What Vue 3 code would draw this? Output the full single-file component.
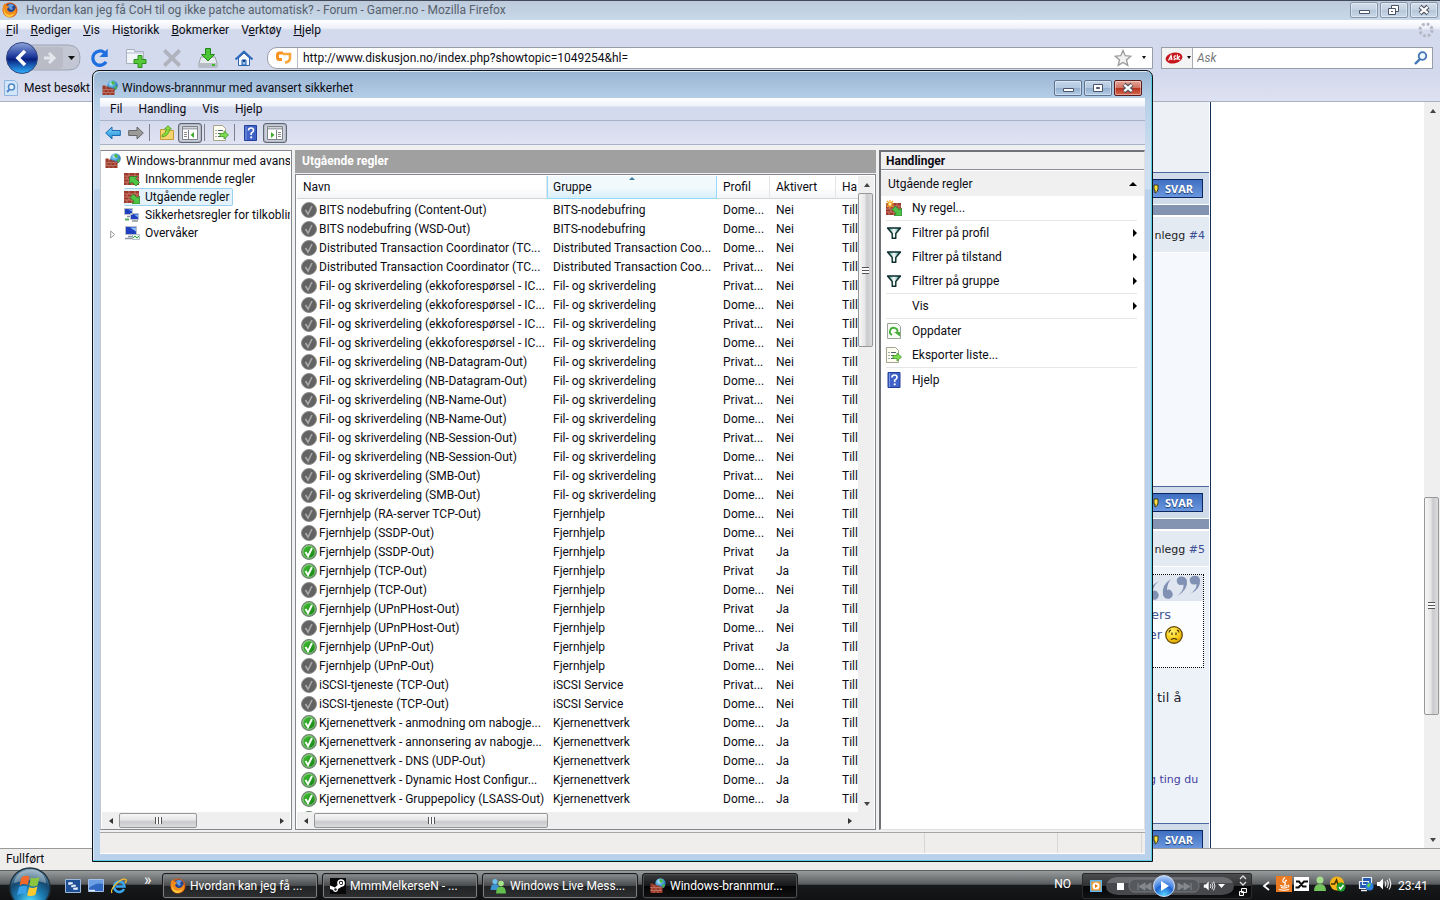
<script setup>
const ffMenu = [
  ['', 'F', 'il'],
  ['', 'R', 'ediger'],
  ['', 'V', 'is'],
  ['Hi', 's', 'torikk'],
  ['', 'B', 'okmerker'],
  ['V', 'e', 'rktøy'],
  ['', 'H', 'jelp'],
]
const navButtons = [
  ['reload', 'Last på nytt'],
  ['newtab', 'Ny fane'],
  ['stop', 'Stopp'],
  ['download', 'Nedlastinger'],
  ['home', 'Hjem'],
]
const mmcMenu = ['Fil', 'Handling', 'Vis', 'Hjelp']

const bits = 'BITS-nodebufring'
const dtc = 'Distributed Transaction Coo...'
const fil = 'Fil- og skriverdeling'
const fj = 'Fjernhjelp'
const isc = 'iSCSI Service'
const kj = 'Kjernenettverk'
const rules = [
  ['BITS nodebufring (Content-Out)', bits, 'Dome...', 0],
  ['BITS nodebufring (WSD-Out)', bits, 'Dome...', 0],
  ['Distributed Transaction Coordinator (TC...', dtc, 'Dome...', 0],
  ['Distributed Transaction Coordinator (TC...', dtc, 'Privat...', 0],
  ['Fil- og skriverdeling (ekkoforespørsel - IC...', fil, 'Privat...', 0],
  ['Fil- og skriverdeling (ekkoforespørsel - IC...', fil, 'Dome...', 0],
  ['Fil- og skriverdeling (ekkoforespørsel - IC...', fil, 'Privat...', 0],
  ['Fil- og skriverdeling (ekkoforespørsel - IC...', fil, 'Dome...', 0],
  ['Fil- og skriverdeling (NB-Datagram-Out)', fil, 'Privat...', 0],
  ['Fil- og skriverdeling (NB-Datagram-Out)', fil, 'Dome...', 0],
  ['Fil- og skriverdeling (NB-Name-Out)', fil, 'Privat...', 0],
  ['Fil- og skriverdeling (NB-Name-Out)', fil, 'Dome...', 0],
  ['Fil- og skriverdeling (NB-Session-Out)', fil, 'Privat...', 0],
  ['Fil- og skriverdeling (NB-Session-Out)', fil, 'Dome...', 0],
  ['Fil- og skriverdeling (SMB-Out)', fil, 'Privat...', 0],
  ['Fil- og skriverdeling (SMB-Out)', fil, 'Dome...', 0],
  ['Fjernhjelp (RA-server TCP-Out)', fj, 'Dome...', 0],
  ['Fjernhjelp (SSDP-Out)', fj, 'Dome...', 0],
  ['Fjernhjelp (SSDP-Out)', fj, 'Privat', 1],
  ['Fjernhjelp (TCP-Out)', fj, 'Privat', 1],
  ['Fjernhjelp (TCP-Out)', fj, 'Dome...', 0],
  ['Fjernhjelp (UPnPHost-Out)', fj, 'Privat', 1],
  ['Fjernhjelp (UPnPHost-Out)', fj, 'Dome...', 0],
  ['Fjernhjelp (UPnP-Out)', fj, 'Privat', 1],
  ['Fjernhjelp (UPnP-Out)', fj, 'Dome...', 0],
  ['iSCSI-tjeneste (TCP-Out)', isc, 'Privat...', 0],
  ['iSCSI-tjeneste (TCP-Out)', isc, 'Dome...', 0],
  ['Kjernenettverk - anmodning om nabogje...', kj, 'Dome...', 1],
  ['Kjernenettverk - annonsering av nabogje...', kj, 'Dome...', 1],
  ['Kjernenettverk - DNS (UDP-Out)', kj, 'Dome...', 1],
  ['Kjernenettverk - Dynamic Host Configur...', kj, 'Dome...', 1],
  ['Kjernenettverk - Gruppepolicy (LSASS-Out)', kj, 'Dome...', 1],
]

const actions = [
  { icon: 'newrule', label: 'Ny regel...', end: true },
  { icon: 'funnel', label: 'Filtrer på profil', sub: true },
  { icon: 'funnel', label: 'Filtrer på tilstand', sub: true },
  { icon: 'funnel', label: 'Filtrer på gruppe', sub: true, end: true },
  { icon: '', label: 'Vis', sub: true, end: true },
  { icon: 'refreshdoc', label: 'Oppdater' },
  { icon: 'export', label: 'Eksporter liste...', end: true },
  { icon: 'help', label: 'Hjelp' },
]

const tasks = [
  { icon: 'firefox', label: 'Hvordan kan jeg få ...' },
  { icon: 'steam', label: 'MmmMelkerseN - ...' },
  { icon: 'people', label: 'Windows Live Mess...' },
  { icon: 'firewall', label: 'Windows-brannmur...', active: true },
]
</script>

<template>
  <div class="desktop">
    <svg class="defs" width="0" height="0" aria-hidden="true">
      <defs>
        <linearGradient id="gBack" x1="0" y1="0" x2="0" y2="1">
          <stop offset="0" stop-color="#8fa5dd" /><stop offset=".45" stop-color="#1d3a9c" />
          <stop offset=".55" stop-color="#08207f" /><stop offset="1" stop-color="#2fb4ff" />
        </linearGradient>
        <linearGradient id="gGreen" x1="0" y1="0" x2="1" y2="1">
          <stop offset="0" stop-color="#4cc83a" /><stop offset="1" stop-color="#0e7a10" />
        </linearGradient>
        <linearGradient id="gBlue" x1="0" y1="0" x2="0" y2="1">
          <stop offset="0" stop-color="#7fd2f7" /><stop offset="1" stop-color="#1d8fdc" />
        </linearGradient>
        <linearGradient id="gFunnel" x1="0" y1="0" x2="1" y2="0">
          <stop offset=".15" stop-color="#5fa9a4" /><stop offset=".5" stop-color="#ffffff" /><stop offset=".9" stop-color="#3c9a94" />
        </linearGradient>
        <radialGradient id="gGlobe" cx=".4" cy=".3" r=".7">
          <stop offset="0" stop-color="#c9f0ff" /><stop offset=".5" stop-color="#4aa5dc" /><stop offset="1" stop-color="#1b5c9f" />
        </radialGradient>
        <radialGradient id="gOrb" cx=".5" cy=".85" r=".85">
          <stop offset="0" stop-color="#55e0ff" /><stop offset=".4" stop-color="#1c7cb4" />
          <stop offset=".7" stop-color="#16486f" /><stop offset="1" stop-color="#8aa9bd" />
        </radialGradient>
        <radialGradient id="gPlay" cx=".5" cy=".95" r=".95">
          <stop offset="0" stop-color="#59d8ff" /><stop offset=".5" stop-color="#1b5fd0" />
          <stop offset=".55" stop-color="#3f7fe0" /><stop offset="1" stop-color="#b9d3f7" />
        </radialGradient>
        <radialGradient id="gSmile" cx=".4" cy=".3" r=".8">
          <stop offset="0" stop-color="#fff36a" /><stop offset=".6" stop-color="#f7c916" /><stop offset="1" stop-color="#c98a00" />
        </radialGradient>
      </defs>

      <symbol id="firefox" viewBox="0 0 16 16">
        <circle cx="8" cy="8" r="7.500" fill="#d9590f" />
        <circle cx="8.600" cy="6.600" r="5.200" fill="#28468f" />
        <path d="M6 3q3-2 6 0l-2 2 1 2-2 1-2-2z" fill="#5f9be0" />
        <path d="M1 4q1-2 2-3l.5 2.200Q6 3 7 5L5 7q1 3 4 3 3 0 4.600-4Q16 11 11.500 14 6 17 2 12 0 9 1 4z" fill="#f08a1c" />
        <path d="M2 6q0 5 4 6.500 4 1 7-2-2 5-7 4.500Q1 13 2 6z" fill="#ffc83a" />
      </symbol>
      <symbol id="reload" viewBox="0 0 20 20">
        <path d="M15.500 13.500A6.500 6.500 0 1 1 14 5" fill="none" stroke="#1f6fe0" stroke-width="3" />
        <path d="M17 1.500v7.500h-7.500z" fill="#1f6fe0" />
      </symbol>
      <symbol id="newtab" viewBox="0 0 22 22">
        <path d="M1.500 16.500v-14h8v2h9v12z" fill="#f2f5fa" stroke="#a8b0c0" />
        <path d="M2 6h16" stroke="#d2d8e4" stroke-width="2" />
        <path d="M13 8.500h4v4h4v4h-4v4h-4v-4H9v-4h4z" fill="#57c83a" stroke="#2b8f1c" />
      </symbol>
      <symbol id="stop" viewBox="0 0 20 20">
        <path d="M3 3l14 14M17 3L3 17" stroke="#b0b3bd" stroke-width="3.500" />
      </symbol>
      <symbol id="download" viewBox="0 0 22 22">
        <path d="M4 10h14l2 6v4H2v-4z" fill="#e9ecef" stroke="#9aa0a8" />
        <path d="M2 16h18v4H2z" fill="#b7bdc4" /><path d="M15 18h3" stroke="#39b82c" stroke-width="2" />
        <path d="M8.500 1.500h5v6h4L11 14 4.500 7.500h4z" fill="#4cc436" stroke="#23871a" />
      </symbol>
      <symbol id="home" viewBox="0 0 22 22">
        <path d="M5.500 11v7.500h11V11L11 6z" fill="#f3f7fc" stroke="#2c64b0" />
        <path d="M2.500 12.500L11 4.500l8.500 8" fill="none" stroke="#2c69bd" stroke-width="2" />
        <path d="M9 13h4v5H9z" fill="#9ac5ee" stroke="#1f5cab" /><circle cx="11" cy="14" r="1.200" fill="#123f82" />
      </symbol>
      <symbol id="site" viewBox="0 0 18 16">
        <path d="M9 3H5.500Q3.500 3 3.500 5v2.500q0 2 2 2H8" fill="none" stroke="#f7931e" stroke-width="3" />
        <path d="M9 4h7v4q0 4-5 4.500" fill="none" stroke="#f7a63a" stroke-width="2.600" />
      </symbol>
      <symbol id="star" viewBox="0 0 18 18">
        <path d="M9 1.500l2.200 5.200 5.500.5-4.200 3.700 1.300 5.500L9 13.500l-4.800 2.900 1.300-5.500L1.300 7.200l5.500-.5z" fill="#f1f1f1" stroke="#9a9a9a" stroke-width="1.300" />
      </symbol>
      <symbol id="ask" viewBox="0 0 18 14">
        <ellipse cx="9" cy="7" rx="8.500" ry="5.300" fill="#c4161c" transform="rotate(-12 9 7)" />
        <path d="M3.500 9.500L6 4.500l1 4.500M4.500 8h2.300M11 5q-2-.5-2 1t1.300 1.500T8.600 9M12.500 3.500l-.5 5.500M15 5l-2.500 2L15 9" fill="none" stroke="#fff" stroke-width="1.200" />
      </symbol>
      <symbol id="search" viewBox="0 0 14 14">
        <circle cx="8.500" cy="5" r="3.800" fill="#eef6fd" stroke="#3f74b5" stroke-width="1.800" />
        <path d="M6 8l-5 5" stroke="#3f74b5" stroke-width="2.400" />
      </symbol>
      <symbol id="bookmark" viewBox="0 0 14 16">
        <path d="M.5.5h10l3 3v12H.5z" fill="#d3e5f8" stroke="#8db5de" />
        <circle cx="7.500" cy="7" r="3" fill="#eaf4fd" stroke="#4f86c4" stroke-width="1.500" />
        <path d="M5.500 9.500L3 12" stroke="#4f86c4" stroke-width="2" />
      </symbol>
      <symbol id="firewall" viewBox="0 0 16 16">
        <circle cx="10.500" cy="5.500" r="5.200" fill="url(#gGlobe)" />
        <path d="M10 1q3 0 3 3l-2 1-2-2zM12 7l3-1q0 3-2 4z" fill="#4db848" />
        <path d="M.5 5.500h3v1h3v1h3v1h3V15H.5z" fill="#9c3a2a" />
        <path d="M0 9.500h12M0 12.500h12M4 7v3M8 9v1M2 10v3M6 10v3M10 10v3M4 13v2M8 13v2" stroke="#c98a7a" stroke-width=".6" />
      </symbol>
      <symbol id="bricks" viewBox="0 0 16 14">
        <path d="M0 1h15v12H0z" fill="#9d3a2c" />
        <path d="M0 4h15M0 7h15M0 10h15M5 1v3M11 1v3M3 4v3M8 4v3M13 4v3M5 7v3M10 7v3M3 10v3M8 10v3" stroke="#d0897c" stroke-width=".8" />
      </symbol>
      <symbol id="inrule" viewBox="0 0 16 14">
        <use href="#bricks" width="16" height="14" />
        <path d="M5.500 4.500h8l-2 2 4 4-3.500 3.500-4-4-2.500 2z" fill="#4fc348" stroke="#1d7a1c" stroke-width=".7" />
      </symbol>
      <symbol id="outrule" viewBox="0 0 16 14">
        <use href="#bricks" width="16" height="14" />
        <path d="M6 7.500L9.500 4l4 4 2-2v8H8l2-2.500z" fill="#4fc348" stroke="#1d7a1c" stroke-width=".7" />
      </symbol>
      <symbol id="newrule" viewBox="0 0 16 16">
        <use href="#bricks" y="2" width="16" height="14" />
        <path d="M6 9.500L9.500 6l4 4 2-2v8H8l2-2.500z" fill="#4fc348" stroke="#1d7a1c" stroke-width=".7" />
        <path d="M4 0v8M0 4h8M1 1l6 6M7 1L1 7" stroke="#f6a623" stroke-width="1.200" /><circle cx="4" cy="4" r="1.500" fill="#fff3a0" />
      </symbol>
      <symbol id="conn" viewBox="0 0 16 14">
        <path d="M.5.5h8v6h-8zM6.500 5.500h8v6h-8z" fill="#1d3fc0" stroke="#b8bec8" />
        <path d="M4 1.500h4v2zM10 6.500h4v3z" fill="#7fb0f5" /><path d="M3 8.500h3M8 13h6" stroke="#8b93a0" stroke-width="1.500" />
        <path d="M1 10.500h4v2H1z" fill="#58a858" />
      </symbol>
      <symbol id="monitor" viewBox="0 0 16 14">
        <path d="M1.500.5h11v8h-11z" fill="#1d3fc0" stroke="#b8bec8" />
        <path d="M6 1.500h6v4z" fill="#8fbcf8" /><path d="M4 10.500h7M1 12.500h10" stroke="#8d95a3" stroke-width="1.500" />
        <path d="M8.500 8.500h7v5h-7z" fill="#e8f3ea" stroke="#9ab" stroke-width=".7" /><path d="M9 12l2-2 2 2 2-2" fill="none" stroke="#2fa03a" />
      </symbol>
      <symbol id="tick0" viewBox="0 0 16 16">
        <circle cx="8" cy="8" r="7.500" fill="#636363" stroke="#8c8c8c" />
        <path d="M4.500 8l2.500 4L11 4" fill="none" stroke="#a9a9a9" stroke-width="1.600" />
      </symbol>
      <symbol id="tick1" viewBox="0 0 16 16">
        <circle cx="8" cy="8" r="7.300" fill="url(#gGreen)" stroke="#70806f" stroke-width="1.300" />
        <circle cx="8" cy="8" r="6.200" fill="none" stroke="#c4dcc0" stroke-width=".7" />
        <path d="M4.500 8l2.500 4L11 4" fill="none" stroke="#fff" stroke-width="1.900" />
      </symbol>
      <symbol id="arrl" viewBox="0 0 16 14">
        <path d="M.7 7L7 1v3.500h8.300v5H7V13z" fill="url(#gBlue)" stroke="#1e6bb0" />
      </symbol>
      <symbol id="arrr" viewBox="0 0 16 14">
        <path d="M15.300 7L9 1v3.500H.7v5H9V13z" fill="#9a9a9a" stroke="#666" />
      </symbol>
      <symbol id="folder" viewBox="0 0 16 16">
        <path d="M1.500 4.500h4l1 1h8v9h-13z" fill="#f4d471" stroke="#c79b34" />
        <path d="M3 10Q7 9 7.500 4H5.500L9 .8 12.500 4h-2Q10 11 3 12z" fill="#8bdc3a" stroke="#4d9a1c" stroke-width=".8" />
      </symbol>
      <symbol id="pane" viewBox="0 0 16 14">
        <path d="M.5.5h15v13H.5z" fill="#fff" stroke="#7d8188" /><path d="M1 2.500h14" stroke="#a6aab2" stroke-width="2" />
        <path d="M6.500 4v9" stroke="#7d8188" /><path d="M2 6.500h3M2 8.500h3M2 10.500h3" stroke="#888" />
        <path d="M12 6v6L8.500 9z" fill="#3fae2f" />
      </symbol>
      <symbol id="pane2" viewBox="0 0 16 14">
        <path d="M.5.5h15v13H.5z" fill="#fff" stroke="#7d8188" /><path d="M1 2.500h14" stroke="#a6aab2" stroke-width="2" />
        <path d="M9.500 4v9" stroke="#7d8188" /><path d="M11 6.500h3M11 8.500h3M11 10.500h3" stroke="#888" />
        <path d="M4 6v6l3.500-3z" fill="#3fae2f" />
      </symbol>
      <symbol id="export" viewBox="0 0 16 16">
        <path d="M.5.500h9l3 3v12H.5z" fill="#fdfcf0" stroke="#a3a38e" />
        <path d="M2.500 5.500h1M5 5.500h5M2.500 8.500h1M5 8.500h3M2.500 11.500h1M5 11.500h3" stroke="#55606e" />
        <path d="M7 8.500h4V6l4.500 4-4.500 4v-2.500H7z" fill="#7fdc52" stroke="#3b9c23" stroke-width=".8" />
      </symbol>
      <symbol id="help" viewBox="0 0 13 16">
        <path d="M.5.5h12v15H.5z" fill="#3f62c8" stroke="#243f98" /><path d="M2 1v14" stroke="#7d98e6" />
        <path d="M4.500 5.500Q4.500 3 7 3t2.500 2.200Q9.500 7 7.200 8.200V10" fill="none" stroke="#fff" stroke-width="1.600" /><circle cx="7.200" cy="12.300" r="1.100" fill="#fff" />
      </symbol>
      <symbol id="refreshdoc" viewBox="0 0 14 16">
        <path d="M.5.5h10l3 3v12H.5z" fill="#f6fbf4" stroke="#9da59a" />
        <path d="M5 12A3.800 3.800 0 1 1 10.500 9" fill="none" stroke="#45ad3a" stroke-width="1.800" /><path d="M7 9h6v4.500z" fill="#45ad3a" />
      </symbol>
      <symbol id="funnel" viewBox="0 0 16 14">
        <path d="M1.500 2h13L9.800 7.500v4.800H6.200V7.500z" fill="url(#gFunnel)" stroke="#0b2c2b" stroke-width="1.400" stroke-linejoin="round" />
      </symbol>
      <symbol id="steam" viewBox="0 0 16 16">
        <path d="M0 0h16v16H0z" fill="#080808" />
        <circle cx="11" cy="5" r="3" fill="none" stroke="#fff" stroke-width="1.700" /><circle cx="11" cy="5" r="1.300" fill="#fff" />
        <path d="M0 7.500l5 2 4-4 3 3-4 2.500q0 3-2.600 3-2 0-2.400-2L0 11z" fill="#fff" /><circle cx="5.500" cy="11.500" r="1.200" fill="#222" />
      </symbol>
      <symbol id="people" viewBox="0 0 16 16">
        <circle cx="5" cy="3.500" r="2.600" fill="#6fc0ec" /><path d="M.5 12q0-6 4.500-6t4.500 6z" fill="#3c93d0" />
        <circle cx="11" cy="5.500" r="2.800" fill="#a6e58a" /><path d="M6 15.500Q6 8.500 11 8.500t5 7z" fill="#63bf4e" />
      </symbol>
      <symbol id="orb" viewBox="0 0 44 44">
        <circle cx="22" cy="22" r="21" fill="url(#gOrb)" stroke="#1d3444" stroke-width="1.500" />
        <path d="M5 17Q8 4 22 3t17 14q-17-6-34 0z" fill="#fff" opacity=".35" />
        <path d="M13 11q4-3 8.500-.8l-1.800 8.600q-4.500-2-8.700.5z" fill="#f2672a" />
        <path d="M23 11q4.500 2 9-.5l-2 8.500q-4 2.500-8.800.3z" fill="#8cc63e" />
        <path d="M10.500 21q4.500-2.500 8.800-.5l-2 8.500q-4-2-8.800.5z" fill="#3aa0e8" />
        <path d="M21 21q4.500 2 8.800-.5l-2 8.500q-4.500 2.500-8.800.5z" fill="#fcc92e" />
      </symbol>
      <symbol id="switcher" viewBox="0 0 16 14">
        <path d="M.5.5h15v13H.5z" fill="#1f4f94" stroke="#9db8dd" />
        <path d="M3 3h5v3H3zM6 5.500h5v3H6zM8 8h5v3H8z" fill="#eaf3fd" stroke="#1f4f94" stroke-width=".5" />
      </symbol>
      <symbol id="showdesk" viewBox="0 0 16 14">
        <path d="M.5.5h15v12H.5z" fill="#2f68c0" stroke="#a5c0e8" /><path d="M1 9Q8 3 15 5V1H1z" fill="#6c9fe4" /><path d="M1 11.500h6" stroke="#dfeafa" stroke-width="1.500" />
      </symbol>
      <symbol id="ie" viewBox="0 0 16 16">
        <path d="M13 11A5.200 5.200 0 1 1 13.500 8.500H5" fill="none" stroke="#3aa6ee" stroke-width="2.600" />
        <path d="M1 15Q-1 12 5 6T15 1.500Q16 3 14 5" fill="none" stroke="#f6c02c" stroke-width="1.300" />
      </symbol>
      <symbol id="wmp" viewBox="0 0 12 12">
        <path d="M.7.7h10.600v10.600H.7z" fill="#f39a2c" stroke="#5fb4ea" stroke-width="1.400" /><circle cx="6" cy="6" r="3.500" fill="#fff" /><path d="M5 4v4l3-2z" fill="#e5700c" />
      </symbol>
      <symbol id="speaker" viewBox="0 0 16 14">
        <path d="M1 5h2.500L7 1.500v11L3.500 9H1z" fill="#fff" /><path d="M9 4.500q1.500 2.500 0 5M11 3q2.500 4 0 8M13 1.500q3.500 5.500 0 11" fill="none" stroke="#e8e8e8" stroke-width="1.200" />
      </symbol>
      <symbol id="java" viewBox="0 0 16 16">
        <path d="M0 0h16v16H0z" fill="#ea7a22" /><path d="M9 1.500Q5 5 8 6.500T8 9M11 4Q8 5.500 9.500 7M4 9.500q4 1.500 7.500 0M5 11.500q3 1 6 0M3 13.500q5 1.500 10 0M12 9q2 1-.5 2.500" fill="none" stroke="#fff" stroke-width="1.100" />
      </symbol>
      <symbol id="xtray" viewBox="0 0 16 16">
        <path d="M0 1h15v14H0z" fill="#fff" /><path d="M1.500 11.500h3L10 5.500h4M2 5.500h3l4 5h3.500" fill="none" stroke="#0c0c0c" stroke-width="2" />
      </symbol>
      <symbol id="buddy" viewBox="0 0 14 16">
        <circle cx="7" cy="4" r="3.500" fill="#a5df8c" /><path d="M1 15Q1 8 7 8t6 7z" fill="#74c25d" />
      </symbol>
      <symbol id="norton" viewBox="0 0 16 16">
        <circle cx="7" cy="7.500" r="7" fill="#f7b519" /><path d="M1 8h3.500l2-4 2 6 1.500-2h3" fill="none" stroke="#4a3200" stroke-width="1.600" />
        <circle cx="11" cy="11" r="4.500" fill="#1f9a2b" /><path d="M9 11l1.500 2 3-4" fill="none" stroke="#fff" stroke-width="1.500" />
      </symbol>
      <symbol id="net" viewBox="0 0 16 16">
        <path d="M4.500 1.500h9v7h-9zM1.500 5.500h9v7h-9z" fill="#235ab0" stroke="#e5edf8" stroke-width="1.200" /><path d="M3 14.500h6" stroke="#e5edf8" stroke-width="1.500" />
        <circle cx="11.500" cy="10.500" r="4" fill="#2b7fe0" /><path d="M9 9q2-3 4-1l-1 2-2 2z" fill="#5fd04e" />
      </symbol>
      <symbol id="sad" viewBox="0 0 18 18">
        <circle cx="9" cy="9" r="8.300" fill="url(#gSmile)" stroke="#5e4000" stroke-width="1.200" />
        <path d="M7 6.500v2.500M11 6.500v2.500M5.800 13.200h1q2.200-1.400 4.400 0h1M4 6.500q0-2 2-2.500M14 6.500q0-2-2-2.500" fill="none" stroke="#3a2800" stroke-width="1.100" />
      </symbol>
      <symbol id="mark" viewBox="0 0 12 10">
        <path d="M1 1h4v4q0 3-3 4V6H1zM7 1h4v4q0 3-3 4V6H7z" fill="#ffe03a" stroke="#3a3a20" />
      </symbol>
      <symbol id="quotes" viewBox="0 0 54 26">
        <g fill="#8191b3">
          <path d="M10 6Q-1 12 1 21q2 5 6 3.500 5-3 1-8-2-1.500-4-.5 0-5 6-10z" />
          <path d="M22 4Q12 10 14 20q2 5 7 3.500 5-3 1-8-2-1.500-4-.5 0-6 4-11z" />
          <path d="M28 21Q39 15 38 6q-1-5-7-4.500-5 2-2.500 7 2 2.500 6 1Q35 16 28 21z" />
          <path d="M41 19Q52 14 51 5q-1-5-7-4-5 2-2.500 7 2 2.500 6 1Q48 14 41 19z" />
        </g>
      </symbol>
      <symbol id="minus" viewBox="0 0 26 14">
        <path d="M8.500 7.500h10v3h-10z" fill="#fff" stroke="#4a5668" />
      </symbol>
      <symbol id="max" viewBox="0 0 26 14">
        <path d="M8.500 3.500h9v7h-9z" fill="#fff" stroke="#4a5668" /><path d="M11.500 6.500h3v1h-3z" fill="#7b8fa8" stroke="#4a5668" />
      </symbol>
      <symbol id="restore" viewBox="0 0 26 14">
        <path d="M10.500 2.500h7v6h-7z" fill="#fff" stroke="#4a5668" /><path d="M7.500 5.500h7v6h-7z" fill="#fff" stroke="#4a5668" /><path d="M10 8.500h2" stroke="#4a5668" />
      </symbol>
      <symbol id="close" viewBox="0 0 26 14">
        <path d="M9 3.500l8 7M17 3.500l-8 7" stroke="#4a4f5e" stroke-width="4.400" /><path d="M9.300 3.800l7.400 6.400M16.700 3.800l-7.400 6.400" stroke="#fff" stroke-width="2.400" />
      </symbol>
    </svg>

    <!-- Browser window -->
    <main class="browser">
      <header class="ff-title">
        <svg width="16" height="16"><use href="#firefox" /></svg>
        <span class="ff-name">Hvordan kan jeg få CoH til og ikke patche automatisk? - Forum - Gamer.no - Mozilla Firefox</span>
        <button class="cap" aria-label="Minimer"><svg width="26" height="14"><use href="#minus" /></svg></button>
        <button class="cap" aria-label="Gjenopprett"><svg width="26" height="14"><use href="#restore" /></svg></button>
        <button class="cap" aria-label="Lukk"><svg width="26" height="14"><use href="#close" /></svg></button>
      </header>
      <nav class="ff-menu">
        <button v-for="m in ffMenu" :key="m.join('')">{{ m[0] }}<u>{{ m[1] }}</u>{{ m[2] }}</button>
        <svg class="throbber" width="16" height="16" viewBox="0 0 16 16">
          <circle cx="8" cy="8" r="6" fill="none" stroke="#b5b8c4" stroke-width="3" stroke-dasharray="2.700 2.010" />
        </svg>
      </nav>
      <div class="ff-nav">
        <svg class="backfwd" width="78" height="32" viewBox="0 0 78 32">
          <path d="M16 3h50q11 1 11 13t-11 12H16z" fill="#c3c7d4" stroke="#9fa4b4" />
          <path d="M32 5h24q4 0 4 4v14q0 4-4 4H32z" fill="#b9bcc7" />
          <path d="M41 16h10M46 11l5 5-5 5" fill="none" stroke="#e4e6ec" stroke-width="3" />
          <path d="M65 14h7l-3.500 4z" fill="#111" />
          <circle cx="19" cy="16" r="15.500" fill="url(#gBack)" stroke="#33457c" />
          <path d="M22 9l-7 7 7 7" fill="none" stroke="#fff" stroke-width="3.500" />
        </svg>
        <button v-for="b in navButtons" :key="b[0]" class="nb" :aria-label="b[1]">
          <svg width="22" height="22"><use :href="'#' + b[0]" /></svg>
        </button>
        <div class="url">
          <span class="fav"><svg width="18" height="16"><use href="#site" /></svg></span>
          <input aria-label="Adresse" value="http://www.diskusjon.no/index.php?showtopic=1049254&amp;hl=" />
          <svg width="18" height="18"><use href="#star" /></svg>
          <button class="drop" aria-label="Historikk"></button>
        </div>
        <div class="find">
          <button class="engine" aria-label="Søkemotor"><svg width="18" height="14"><use href="#ask" /></svg><i class="drop"></i></button>
          <input class="ask" aria-label="Søk" placeholder="Ask" />
          <svg width="14" height="14"><use href="#search" /></svg>
        </div>
      </div>
      <div class="ff-marks">
        <svg width="14" height="16"><use href="#bookmark" /></svg>
        <a href="#">Mest besøkt</a>
      </div>
      <div class="ff-view">
        <div class="page">
          <section class="post">
            <div class="body b1"></div>
            <footer><button class="svar"><svg width="12" height="10"><use href="#mark" /></svg>SVAR</button></footer>
          </section>
          <section class="post">
            <div class="bar"></div>
            <div class="head">nlegg <a href="#">#4</a></div>
            <div class="body b2"></div>
            <footer><button class="svar"><svg width="12" height="10"><use href="#mark" /></svg>SVAR</button></footer>
          </section>
          <section class="post">
            <div class="bar"></div>
            <div class="head">nlegg <a href="#">#5</a></div>
            <div class="body b3">
              <blockquote>
                <div class="qh"><svg width="54" height="26"><use href="#quotes" /></svg></div>
                <p>ers</p>
                <p class="p2">er <svg width="18" height="18"><use href="#sad" /></svg></p>
              </blockquote>
              <p class="say">til å</p>
              <p class="sig">g ting du</p>
            </div>
            <footer><button class="svar"><svg width="12" height="10"><use href="#mark" /></svg>SVAR</button></footer>
          </section>
        </div>
        <div class="sb v">
          <button class="up" aria-label="Opp"></button>
          <i class="g380"></i><span class="thumb g217"></span><i class="g117"></i>
          <button class="down" aria-label="Ned"></button>
        </div>
      </div>
      <footer class="ff-status">Fullført</footer>
    </main>

    <!-- Firewall console -->
    <section class="mmc">
      <header class="mmc-title">
        <svg width="16" height="16"><use href="#firewall" /></svg>
        <h1>Windows-brannmur med avansert sikkerhet</h1>
        <button class="cap" aria-label="Minimer"><svg width="26" height="14"><use href="#minus" /></svg></button>
        <button class="cap" aria-label="Maksimer"><svg width="26" height="14"><use href="#max" /></svg></button>
        <button class="cap red" aria-label="Lukk"><svg width="26" height="14"><use href="#close" /></svg></button>
      </header>
      <div class="client">
        <nav class="mmc-menu"><button v-for="m in mmcMenu" :key="m">{{ m }}</button></nav>
        <div class="mmc-tools">
          <button class="tb" aria-label="Tilbake"><svg width="16" height="14"><use href="#arrl" /></svg></button>
          <button class="tb" aria-label="Frem"><svg width="16" height="14"><use href="#arrr" /></svg></button>
          <i class="sep"></i>
          <button class="tb" aria-label="Opp ett nivå"><svg width="16" height="16"><use href="#folder" /></svg></button>
          <button class="tb on" aria-label="Konsolltre"><svg width="16" height="14"><use href="#pane" /></svg></button>
          <i class="sep tight"></i>
          <button class="tb" aria-label="Eksporter"><svg width="16" height="16"><use href="#export" /></svg></button>
          <i class="sep"></i>
          <button class="tb narrow" aria-label="Hjelp"><svg width="13" height="16"><use href="#help" /></svg></button>
          <button class="tb on" aria-label="Handlingsrute"><svg width="16" height="14"><use href="#pane2" /></svg></button>
        </div>
        <div class="panes">
          <aside class="tree">
            <ul>
              <li><svg width="16" height="16"><use href="#firewall" /></svg><span>Windows-brannmur med avansert</span></li>
              <li class="sub"><i class="tw"></i><svg width="16" height="14"><use href="#inrule" /></svg><span>Innkommende regler</span></li>
              <li class="sub"><i class="tw"></i><div class="sel"><svg width="16" height="14"><use href="#outrule" /></svg><span>Utgående regler</span></div></li>
              <li class="sub"><i class="tw"></i><svg width="16" height="14"><use href="#conn" /></svg><span>Sikkerhetsregler for tilkobling</span></li>
              <li class="sub">
                <i class="tw"><svg width="6" height="9" viewBox="0 0 6 9"><path d="M.7 1v7l4-3.500z" fill="#fff" stroke="#9a9a9a" /></svg></i>
                <svg width="16" height="14"><use href="#monitor" /></svg><span>Overvåker</span>
              </li>
            </ul>
            <div class="sb h">
              <button class="left" aria-label="Venstre"></button>
              <span class="thumb g77"></span><i class="g77"></i>
              <button class="right" aria-label="Høyre"></button>
            </div>
          </aside>

          <section class="rules">
            <h2>Utgående regler</h2>
            <div class="listbox">
              <div class="listrow">
                <div class="clip">
                  <table>
                    <colgroup><col class="c1" /><col class="c2" /><col class="c3" /><col class="c4" /><col /></colgroup>
                    <thead>
                      <tr><th>Navn</th><th class="sorted">Gruppe</th><th>Profil</th><th>Aktivert</th><th>Ha</th></tr>
                    </thead>
                    <tbody>
                      <tr v-for="(r, i) in rules" :key="i">
                        <td class="name"><svg width="16" height="16"><use :href="'#tick' + r[3]" /></svg>{{ r[0] }}</td>
                        <td>{{ r[1] }}</td>
                        <td>{{ r[2] }}</td>
                        <td>{{ r[3] ? 'Ja' : 'Nei' }}</td>
                        <td>Till</td>
                      </tr>
                      <tr>
                        <td class="name"><svg width="16" height="16"><use href="#tick1" /></svg></td>
                        <td></td><td></td><td></td><td></td>
                      </tr>
                    </tbody>
                  </table>
                </div>
                <div class="sb v">
                  <button class="up" aria-label="Opp"></button>
                  <span class="thumb g152"></span><i class="g448"></i>
                  <button class="down" aria-label="Ned"></button>
                </div>
              </div>
              <div class="sb h corner">
                <button class="left" aria-label="Venstre"></button>
                <span class="thumb g232"></span><i class="g293"></i>
                <button class="right" aria-label="Høyre"></button>
              </div>
            </div>
          </section>

          <aside class="actions">
            <h2>Handlinger</h2>
            <button class="group">Utgående regler<i class="tri-up"></i></button>
            <ul>
              <li v-for="a in actions" :key="a.label" :class="{ end: a.end }">
                <button>
                  <span class="ai"><svg v-if="a.icon" width="16" height="16"><use :href="'#' + a.icon" /></svg></span>
                  {{ a.label }}<i v-if="a.sub" class="tri-right"></i>
                </button>
              </li>
            </ul>
          </aside>
        </div>
        <footer class="mmc-status"><i></i><i></i><i></i></footer>
      </div>
    </section>

    <!-- Taskbar -->
    <footer class="taskbar">
      <button class="start" aria-label="Start"><svg width="42" height="42"><use href="#orb" /></svg></button>
      <div class="quick">
        <button aria-label="Bytt mellom vinduer"><svg width="16" height="14"><use href="#switcher" /></svg></button>
        <button aria-label="Vis skrivebordet"><svg width="16" height="14"><use href="#showdesk" /></svg></button>
        <button aria-label="Internet Explorer"><svg width="16" height="16"><use href="#ie" /></svg></button>
      </div>
      <span class="more">»</span>
      <div class="tasks">
        <button v-for="t in tasks" :key="t.label" :class="{ active: t.active }">
          <svg width="16" height="16"><use :href="'#' + t.icon" /></svg>{{ t.label }}
        </button>
      </div>
      <span class="lang">NO</span>
      <div class="media">
        <svg width="12" height="12"><use href="#wmp" /></svg>
        <svg width="132" height="24" viewBox="0 0 132 24">
          <path d="M14 3h104q12 1 12 9t-12 9H14Q2 20 2 12t12-9z" fill="#46484b" />
          <path d="M14 3h104q8 0 11 6H3q3-6 11-6z" fill="#6a6c70" />
          <rect x="13" y="9" width="7" height="7" fill="#fff" />
          <path d="M30 5h60q5 2 5 7t-5 6H30q-5-1-5-6t5-7z" fill="#55585c" stroke="#77797d" />
          <path d="M34 9v7M41 9v7l-6-3.500zM47 9v7l-6-3.500zM80 9v7l6-3.500zM74 9v7l6-3.500zM87 9v7" fill="#85888d" stroke="#85888d" />
          <circle cx="60" cy="12" r="10.500" fill="url(#gPlay)" stroke="#d0dcf0" />
          <path d="M57 7v10l8-5z" fill="#fff" />
          <use href="#speaker" x="99" y="6" width="13" height="12" />
          <path d="M114 10h7l-3.500 4z" fill="#fff" />
        </svg>
        <svg width="10" height="24" viewBox="0 0 10 24">
          <path d="M2 5l3-3 3 3M2 8l3 3 3-3" fill="none" stroke="#ddd" stroke-width="1.300" />
          <path d="M3.500 14.500h5v4h-5zM1.500 17.500h4v4h-4z" fill="#222" stroke="#fff" />
        </svg>
      </div>
      <svg class="chev" width="8" height="10" viewBox="0 0 8 10"><path d="M7 1L2 5l5 4" fill="none" stroke="#fff" stroke-width="1.800" /></svg>
      <div class="tray">
        <svg width="16" height="16"><use href="#java" /></svg>
        <svg width="16" height="16"><use href="#xtray" /></svg>
        <svg width="16" height="16"><use href="#buddy" /></svg>
        <svg width="16" height="16"><use href="#norton" /></svg>
      </div>
      <div class="tray sys">
        <svg width="16" height="16"><use href="#net" /></svg>
        <svg width="16" height="14"><use href="#speaker" /></svg>
      </div>
      <time>23:41</time>
    </footer>
  </div>
</template>

<style>
html, body { background: #fff; overflow: hidden; }
</style>

<style scoped>
* { box-sizing: border-box; }
.desktop {
  position: relative; height: 100vh; display: flex; flex-direction: column; overflow: hidden;
  font: 12px/16px Roboto, "Open Sans", sans-serif; color: #0c0c14;
}
.defs { position: absolute; }
svg { display: block; flex: none; }
button { font: inherit; color: inherit; background: none; border: 0; padding: 0; margin: 0; text-align: left; white-space: nowrap; }
a { color: inherit; text-decoration: none; }
h1, h2, p, ul, blockquote { margin: 0; padding: 0; font-size: 12px; font-weight: 400; }
ul { list-style: none; }
input { font: inherit; color: inherit; border: 0; outline: 0; padding: 0; background: transparent; flex: 1; min-width: 0; }

/* browser */
.browser { flex: 1; min-height: 0; display: flex; flex-direction: column; }
.ff-title {
  height: 20px; flex: none; display: flex; align-items: center; gap: 2px; padding: 0 2px 1px;
  border-top: 1px solid #434b5b; background: linear-gradient(#bdcadb, #c9d9e8); color: #56616e;
}
.ff-name { flex: 1; padding-left: 6px; white-space: nowrap; overflow: hidden; }
.cap {
  width: 28px; height: 16px; border: 1px solid #8796ab; border-radius: 2px;
  background: linear-gradient(#d3deea, #c2d0e0 50%, #b6c6d9 50%, #c8d8e8); box-shadow: inset 0 0 0 1px rgba(255, 255, 255, .4);
}
.ff-menu {
  height: 20px; flex: none; display: flex; align-items: center; gap: 12px; padding: 0 6px;
  background: linear-gradient(#fff, #eef1f9 40%, #d4daed 50%);
}
.throbber { margin-left: auto; }
.ff-nav { height: 35px; flex: none; display: flex; align-items: center; padding: 0 7px 0 3px; background: #d4daed; }
.nb { width: 36px; display: flex; justify-content: center; }
.backfwd { margin-right: 1px; }
.url, .find { display: flex; align-items: center; height: 22px; background: #fff; border: 1px solid #9a9ea8; }
.url { flex: 1; margin: 0 8px 0 5px; border-radius: 10px 0 0 10px; padding-right: 4px; gap: 5px; }
.fav { width: 30px; height: 20px; display: flex; align-items: center; justify-content: center; border-right: 1px solid #b8bbc2; }
.drop { width: 0; height: 0; margin-left: 4px; border: 2px solid transparent; border-top: 3px solid #111; border-bottom: 0; }
.url .drop { margin: 0 2px 0 5px; }
.find { width: 272px; padding-right: 4px; }
.engine { display: flex; align-items: center; width: 31px; height: 20px; padding-left: 3px; background: #f4f4f4; border-right: 1px solid #a9acb4; }
.ask { padding-left: 4px; font-style: italic; }
.ask::placeholder { color: #777; opacity: 1; }
.ff-marks {
  height: 27px; flex: none; display: flex; align-items: center; gap: 6px; padding: 0 4px;
  background: linear-gradient(#d4daed, #dde1f1); border-bottom: 1px solid #a8b1c2;
}
.ff-view { flex: 1; min-height: 0; display: flex; overflow: hidden; background: #fff; }
.page { flex: 1; min-width: 0; margin: 0 213px; border-right: 1px solid #152f57; display: flex; flex-direction: column; align-items: stretch; font-family: "DejaVu Sans", sans-serif; }
.post { padding-right: 1px; flex: none; }
.body { border-bottom: 1px solid #4a689b; }
.b1 { height: 71px; background: #edf1f6; }
.b2 { height: 234px; background: #f5f9fd; }
.b3 { height: 257px; background: #edf2f8; padding: 7px 5px 0 0; display: flex; flex-direction: column; align-items: flex-end; }
.post footer { height: 31px; padding: 6px 6px 0 0; background: #d1dceb; display: flex; justify-content: flex-end; align-items: flex-start; }
.svar {
  height: 19px; width: 62px; border: 1px solid #0c2660; background: linear-gradient(#3f6fc0, #6a97de);
  color: #fff; font: 700 11px/17px "Open Sans", sans-serif; display: flex; align-items: center; padding: 0 9px 0 0; justify-content: flex-end; gap: 6px;
  text-shadow: 0 1px 1px #18386f;
}
.bar { height: 12px; background: #8394b2; border: solid #fff; border-width: 1px 0; }
.head { height: 37px; border: solid #fff; border-width: 1px 0; background: #e4eaf2; text-align: right; line-height: 37px; font-size: 11px; padding-right: 4px; color: #222; }
.head a { color: #3a4f93; }
blockquote { width: 70px; height: 94px; border: 1px dotted #000; background: #fbfdff; color: #465a94; padding-left: 16px; }
.qh { height: 26px; margin: 0 0 4px -16px; background: #dfe6ef; display: flex; justify-content: flex-end; }
blockquote p { font-size: 13px; line-height: 20px; height: 20px; display: flex; align-items: center; gap: 3px; }
blockquote .p2 { justify-content: flex-end; padding-right: 20px; }
.say { width: 47px; margin-top: 22px; font-size: 13px; color: #1c1c2c; }
.sig { width: 55px; margin-top: 66px; font-size: 11px; color: #4340a0; white-space: nowrap; }
.ff-status { height: 22px; flex: none; border-top: 1px solid #9a9a9a; background: #f0eeed; padding: 2px 6px; }

/* scrollbars */
.sb { display: flex; flex: none; background: #efefef; }
.sb.v { flex-direction: column; width: 16px; }
.sb.h { height: 17px; }
.sb button { width: 17px; height: 17px; flex: none; display: flex; align-items: center; justify-content: center; }
.sb button::after { content: ""; border: 3px solid transparent; }
.sb .up::after { border-bottom: 4px solid #444; border-top: 0; }
.sb .down::after { border-top: 4px solid #444; border-bottom: 0; }
.sb .left::after { border-right: 4px solid #333; border-left: 0; }
.sb .right::after { border-left: 4px solid #333; border-right: 0; }
.thumb { display: flex; align-items: center; justify-content: center; border: 1px solid #979797; border-radius: 2px; }
.v .thumb { background: linear-gradient(90deg, #f6f6f6, #e6e6e8 45%, #c9cacd 60%, #dcdcde); margin-right: 1px; }
.h .thumb { background: linear-gradient(#f6f6f6, #e6e6e8 45%, #c9cacd 60%, #dcdcde); margin: 1px 0; }
.thumb::after { content: ""; width: 7px; height: 7px; }
.v .thumb::after { background: repeating-linear-gradient(#555 0 1px, #fafafa 1px 3px); }
.h .thumb::after { background: repeating-linear-gradient(90deg, #555 0 1px, #fafafa 1px 3px); }
.g380 { flex: 380; } .g217 { flex: 217; } .g117 { flex: 117; }
.g77 { flex: 77; } .g152 { flex: 152; } .g448 { flex: 448; } .g232 { flex: 232; } .g293 { flex: 293; }

/* console window */
.mmc {
  position: absolute; left: 92px; right: 287px; top: 70px; bottom: 38px; display: flex; flex-direction: column;
  border: 1px solid #0d1118; border-radius: 7px 7px 0 0; padding: 0 7px 7px;
  background: linear-gradient(#99b4d3, #b6cfe8 28px, #cfdff0 90px, #cddff2 118px, #b9d1ea 119px, #b9d1ea);
  box-shadow: inset -1px -1px 0 #55cfe0, inset 1px 1px 0 #dbe8f5;
}
.mmc-title { height: 27px; flex: none; display: flex; align-items: center; gap: 2px; padding: 6px 3px 0 2px; }
.mmc-title h1 { flex: 1; padding-left: 2px; white-space: nowrap; }
.mmc .cap { border-color: #5d7390; background: linear-gradient(#c5d6e9, #b1c7e0 50%, #93aecd 50%, #b2cce6); }
.mmc .red { border-color: #5a1a1a; background: linear-gradient(#e5a79b, #d2705f 50%, #b5301d 50%, #d5694f); }
.client { flex: 1; min-height: 0; display: flex; flex-direction: column; background: #f0f0f0; }
.mmc-menu { height: 23px; flex: none; display: flex; align-items: center; gap: 16px; padding: 0 10px; background: linear-gradient(#fff, #eef1f9 36%, #d4daed 42%, #d4daed); border-bottom: 1px solid #a9b3c8; }
.mmc-tools { height: 24px; flex: none; display: flex; align-items: center; padding: 0 1px; background: linear-gradient(#d4daed, #e0e3f2); border-bottom: 1px solid #a9b3c8; }
.tb { width: 23px; height: 20px; display: flex; align-items: center; justify-content: center; }
.on { border: 1px solid #5f6672; border-radius: 3px; background: #cdd2de; box-shadow: inset 0 0 2px #6f7684; width: 24px; }
.narrow { width: 21px; margin-right: 2px; }
.sep { width: 1px; height: 17px; margin: 0 5px 0 2px; background: #7c818c; }
.tight { margin: 0 4px 0 2px; }
.panes { flex: 1; min-height: 0; display: flex; gap: 3px; padding-top: 5px; }
.tree { width: 192px; flex: none; display: flex; flex-direction: column; background: #fff; border: 1px solid #828790; border-left-color: #c4c7cc; }
.tree ul { flex: 1; min-height: 0; overflow: hidden; padding: 1px 1px 0 4px; }
.tree li { height: 18px; display: flex; align-items: center; gap: 5px; white-space: nowrap; overflow: hidden; }
.tree .sub { padding-left: 5px; }
.tw { width: 9px; flex: none; padding-top: 2px; }
.sel { display: flex; align-items: center; gap: 5px; height: 18px; border: 1px solid #99d1ee; border-left: 0; border-radius: 2px; background: #e4f3fb; padding-right: 3px; }
.tree .sb { margin: 0 1px; }
.rules { flex: 1; min-width: 0; display: flex; flex-direction: column; }
.rules h2 { height: 23px; flex: none; background: #a0a0a0; color: #fff; font-weight: 700; line-height: 23px; padding-left: 7px; margin-bottom: 1px; }
.listbox { flex: 1; min-height: 0; display: flex; flex-direction: column; background: #fff; border: 1px solid #828790; padding: 1px 1px 0; }
.listrow { flex: 1; min-height: 0; display: flex; }
.clip { flex: 1; min-width: 0; overflow: hidden; height: 100%; }
table { width: 100%; table-layout: fixed; border-collapse: separate; border-spacing: 0; }
.c1 { width: 250px; } .c2 { width: 170px; } .c3 { width: 53px; } .c4 { width: 66px; }
th { position: relative; height: 23px; padding: 0 0 0 6px; text-align: left; font-weight: 400; background: linear-gradient(#fff 50%, #f4f5f7); border-bottom: 1px solid #d5d5d5; border-right: 1px solid #e3e5ea; }
.sorted { background: linear-gradient(#f2f9fd 50%, #d9eff9); border-color: #96d9f9; border-left: 1px solid #96d9f9; padding-left: 5px; }
.sorted::after { content: ""; position: absolute; top: 1px; left: 50%; border: 3px solid transparent; border-top: 0; border-bottom: 3px solid #3c7a9c; margin-left: -3px; }
td { height: 19px; padding: 0 0 0 6px; white-space: nowrap; overflow: hidden; line-height: 19px; }
th:last-child { border-right: 0; overflow: hidden; }
tbody::before { content: ""; display: block; height: 2px; }
.name { padding-left: 4px; }
.name svg { float: left; margin: 1px 2px 0 0; }
.corner { padding-right: 16px; }
.actions { width: 266px; flex: none; background: #fff; border: 1px solid #828790; border-width: 2px 1px 1px 2px; border-color: #6f7277 #e0e0e0 #e0e0e0 #6f7277; }
.actions h2 { height: 18px; line-height: 18px; padding-left: 5px; font-weight: 700; background: #f0f0f0; border-bottom: 1px solid #8b8f96; }
.group { width: 100%; height: 26px; display: flex; align-items: center; justify-content: space-between; background: #f0f0f0; border-top: 1px solid #fff; padding: 0 7px; }
.tri-up { border: 4px solid transparent; border-top: 0; border-bottom: 4px solid #000; }
.tri-right { margin-left: auto; border: 4px solid transparent; border-right: 0; border-left: 4px solid #000; }
.actions ul { padding: 0 7px 0 5px; }
.actions li button { display: flex; align-items: center; width: 100%; height: 24px; }
.actions .end { border-bottom: 1px solid #e6e6e6; }
.ai { width: 26px; }
.mmc-status { height: 22px; flex: none; margin-top: 2px; display: flex; justify-content: flex-end; border-top: 1px solid #a5a5a5; border-bottom: 1px solid #fff; background: #f0eded; }
.mmc-status i { border-left: 1px solid #d9d6d6; width: 133px; }
.mmc-status i + i { width: 84px; }
.mmc-status i + i + i { width: 4px; }

/* taskbar */
.taskbar {
  height: 30px; flex: none; display: flex; align-items: center; border-top: 1px solid #5c5f60; color: #fff; padding-right: 12px;
  background: linear-gradient(#989b9c, #5a5d5f 45%, #17191b 50%, #101113);
}
.start { position: relative; top: -4px; height: 30px; margin-left: 9px; }
.quick { display: flex; align-items: center; gap: 7px; margin-left: 14px; }
.more { margin: 0 0 12px 17px; font-size: 16px; line-height: 14px; width: 18px; }
.tasks { flex: 1; min-width: 0; display: flex; gap: 4px; }
.tasks button {
  width: 156px; height: 26px; display: flex; align-items: center; gap: 4px; padding: 0 7px; overflow: hidden; border: 1px solid #1b1c1e; border-radius: 3px;
  background: linear-gradient(#8a8d8f, #4a4c4e 48%, #222426 52%, #2c2e30); box-shadow: inset 0 0 0 1px #7b7d7f;
}
.tasks .active { background: linear-gradient(#3b3d3f, #17181a 48%, #050506 52%, #111); box-shadow: inset 0 0 0 1px #4c4e50; }
.lang { margin-right: 11px; padding-bottom: 4px; }
.media { height: 26px; width: 170px; display: flex; align-items: center; justify-content: space-between; padding: 0 3px 0 7px; border: 1px solid #2a2c2e; border-radius: 2px; background: linear-gradient(#4a4c4e, #303234 48%, #060607 52%, #101113); }
.chev { margin: 0 6px 0 10px; }
.tray { display: flex; align-items: center; gap: 2px; padding-bottom: 3px; }
.sys { margin: 0 6px 0 12px; }
time { white-space: nowrap; }
</style>
